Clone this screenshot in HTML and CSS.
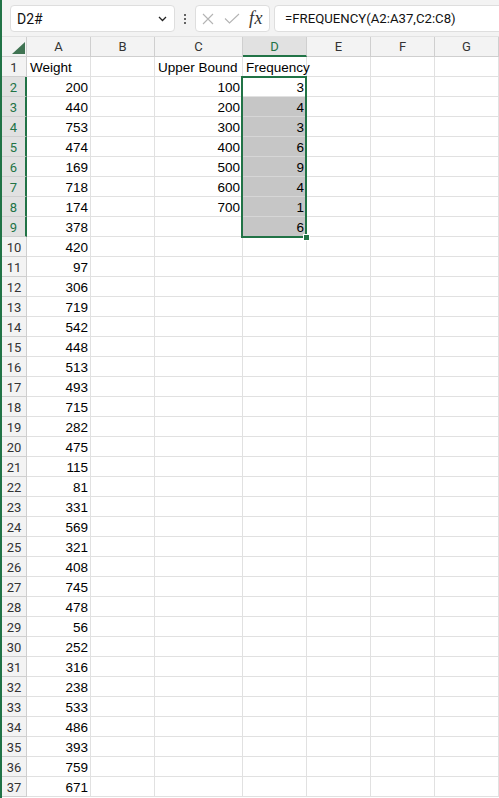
FILE: index.html
```html
<!DOCTYPE html>
<html>
<head>
<meta charset="utf-8">
<link rel="stylesheet" href="styles.css">
</head>
<body>
<div class="app">
  <div class="topbar">
    <div class="namebox">
      <span class="nbtext">D2#</span>
      <svg class="chev" width="9" height="6" viewBox="0 0 9 6"><path d="M1 1 L4.5 4.5 L8 1" fill="none" stroke="#222" stroke-width="1.3"/></svg>
    </div>
    <div class="dots"><i></i><i></i><i></i></div>
    <div class="fbtns">
      <svg class="xicon" width="12" height="12" viewBox="0 0 12 12"><path d="M1 1 L11 11 M11 1 L1 11" stroke="#b4b4b4" stroke-width="1.1" fill="none"/></svg>
      <svg class="check" width="16" height="11" viewBox="0 0 16 11"><path d="M1 5.5 L5.5 10 L15 1" stroke="#b4b4b4" stroke-width="1.1" fill="none"/></svg>
      <span class="fx">fx</span>
    </div>
    <div class="formula">=FREQUENCY(A2:A37,C2:C8)</div>
  </div>
  <div class="sheet">
    <div class="row head">
      <div class="corner"><svg width="13" height="12" viewBox="0 0 13 12"><path d="M13 0 L13 12 L0 12 Z" fill="#3f7352"/></svg></div>
      <div class="ch">A</div><div class="ch">B</div><div class="ch">C</div><div class="ch sel">D</div><div class="ch">E</div><div class="ch">F</div><div class="ch">G</div>
    </div>
    <div class="row"><div class="rh">1</div><div class="c">Weight</div><div class="c"></div><div class="c">Upper Bound</div><div class="c">Frequency</div><div class="c"></div><div class="c"></div><div class="c"></div></div>
    <div class="row"><div class="rh sel">2</div><div class="c n">200</div><div class="c"></div><div class="c n">100</div><div class="c n">3</div><div class="c"></div><div class="c"></div><div class="c"></div></div>
    <div class="row"><div class="rh sel">3</div><div class="c n">440</div><div class="c"></div><div class="c n">200</div><div class="c n g">4</div><div class="c"></div><div class="c"></div><div class="c"></div></div>
    <div class="row"><div class="rh sel">4</div><div class="c n">753</div><div class="c"></div><div class="c n">300</div><div class="c n g">3</div><div class="c"></div><div class="c"></div><div class="c"></div></div>
    <div class="row"><div class="rh sel">5</div><div class="c n">474</div><div class="c"></div><div class="c n">400</div><div class="c n g">6</div><div class="c"></div><div class="c"></div><div class="c"></div></div>
    <div class="row"><div class="rh sel">6</div><div class="c n">169</div><div class="c"></div><div class="c n">500</div><div class="c n g">9</div><div class="c"></div><div class="c"></div><div class="c"></div></div>
    <div class="row"><div class="rh sel">7</div><div class="c n">718</div><div class="c"></div><div class="c n">600</div><div class="c n g">4</div><div class="c"></div><div class="c"></div><div class="c"></div></div>
    <div class="row"><div class="rh sel">8</div><div class="c n">174</div><div class="c"></div><div class="c n">700</div><div class="c n g">1</div><div class="c"></div><div class="c"></div><div class="c"></div></div>
    <div class="row"><div class="rh sel">9</div><div class="c n">378</div><div class="c"></div><div class="c"></div><div class="c n g last">6</div><div class="c"></div><div class="c"></div><div class="c"></div></div>
    <div class="row"><div class="rh">10</div><div class="c n">420</div><div class="c"></div><div class="c"></div><div class="c"></div><div class="c"></div><div class="c"></div><div class="c"></div></div>
    <div class="row"><div class="rh">11</div><div class="c n">97</div><div class="c"></div><div class="c"></div><div class="c"></div><div class="c"></div><div class="c"></div><div class="c"></div></div>
    <div class="row"><div class="rh">12</div><div class="c n">306</div><div class="c"></div><div class="c"></div><div class="c"></div><div class="c"></div><div class="c"></div><div class="c"></div></div>
    <div class="row"><div class="rh">13</div><div class="c n">719</div><div class="c"></div><div class="c"></div><div class="c"></div><div class="c"></div><div class="c"></div><div class="c"></div></div>
    <div class="row"><div class="rh">14</div><div class="c n">542</div><div class="c"></div><div class="c"></div><div class="c"></div><div class="c"></div><div class="c"></div><div class="c"></div></div>
    <div class="row"><div class="rh">15</div><div class="c n">448</div><div class="c"></div><div class="c"></div><div class="c"></div><div class="c"></div><div class="c"></div><div class="c"></div></div>
    <div class="row"><div class="rh">16</div><div class="c n">513</div><div class="c"></div><div class="c"></div><div class="c"></div><div class="c"></div><div class="c"></div><div class="c"></div></div>
    <div class="row"><div class="rh">17</div><div class="c n">493</div><div class="c"></div><div class="c"></div><div class="c"></div><div class="c"></div><div class="c"></div><div class="c"></div></div>
    <div class="row"><div class="rh">18</div><div class="c n">715</div><div class="c"></div><div class="c"></div><div class="c"></div><div class="c"></div><div class="c"></div><div class="c"></div></div>
    <div class="row"><div class="rh">19</div><div class="c n">282</div><div class="c"></div><div class="c"></div><div class="c"></div><div class="c"></div><div class="c"></div><div class="c"></div></div>
    <div class="row"><div class="rh">20</div><div class="c n">475</div><div class="c"></div><div class="c"></div><div class="c"></div><div class="c"></div><div class="c"></div><div class="c"></div></div>
    <div class="row"><div class="rh">21</div><div class="c n">115</div><div class="c"></div><div class="c"></div><div class="c"></div><div class="c"></div><div class="c"></div><div class="c"></div></div>
    <div class="row"><div class="rh">22</div><div class="c n">81</div><div class="c"></div><div class="c"></div><div class="c"></div><div class="c"></div><div class="c"></div><div class="c"></div></div>
    <div class="row"><div class="rh">23</div><div class="c n">331</div><div class="c"></div><div class="c"></div><div class="c"></div><div class="c"></div><div class="c"></div><div class="c"></div></div>
    <div class="row"><div class="rh">24</div><div class="c n">569</div><div class="c"></div><div class="c"></div><div class="c"></div><div class="c"></div><div class="c"></div><div class="c"></div></div>
    <div class="row"><div class="rh">25</div><div class="c n">321</div><div class="c"></div><div class="c"></div><div class="c"></div><div class="c"></div><div class="c"></div><div class="c"></div></div>
    <div class="row"><div class="rh">26</div><div class="c n">408</div><div class="c"></div><div class="c"></div><div class="c"></div><div class="c"></div><div class="c"></div><div class="c"></div></div>
    <div class="row"><div class="rh">27</div><div class="c n">745</div><div class="c"></div><div class="c"></div><div class="c"></div><div class="c"></div><div class="c"></div><div class="c"></div></div>
    <div class="row"><div class="rh">28</div><div class="c n">478</div><div class="c"></div><div class="c"></div><div class="c"></div><div class="c"></div><div class="c"></div><div class="c"></div></div>
    <div class="row"><div class="rh">29</div><div class="c n">56</div><div class="c"></div><div class="c"></div><div class="c"></div><div class="c"></div><div class="c"></div><div class="c"></div></div>
    <div class="row"><div class="rh">30</div><div class="c n">252</div><div class="c"></div><div class="c"></div><div class="c"></div><div class="c"></div><div class="c"></div><div class="c"></div></div>
    <div class="row"><div class="rh">31</div><div class="c n">316</div><div class="c"></div><div class="c"></div><div class="c"></div><div class="c"></div><div class="c"></div><div class="c"></div></div>
    <div class="row"><div class="rh">32</div><div class="c n">238</div><div class="c"></div><div class="c"></div><div class="c"></div><div class="c"></div><div class="c"></div><div class="c"></div></div>
    <div class="row"><div class="rh">33</div><div class="c n">533</div><div class="c"></div><div class="c"></div><div class="c"></div><div class="c"></div><div class="c"></div><div class="c"></div></div>
    <div class="row"><div class="rh">34</div><div class="c n">486</div><div class="c"></div><div class="c"></div><div class="c"></div><div class="c"></div><div class="c"></div><div class="c"></div></div>
    <div class="row"><div class="rh">35</div><div class="c n">393</div><div class="c"></div><div class="c"></div><div class="c"></div><div class="c"></div><div class="c"></div><div class="c"></div></div>
    <div class="row"><div class="rh">36</div><div class="c n">759</div><div class="c"></div><div class="c"></div><div class="c"></div><div class="c"></div><div class="c"></div><div class="c"></div></div>
    <div class="row"><div class="rh">37</div><div class="c n">671</div><div class="c"></div><div class="c"></div><div class="c"></div><div class="c"></div><div class="c"></div><div class="c"></div></div>
    <div class="selection"><span class="handle"></span></div>
  </div>
</div>
</body>
</html>
```
FILE: styles.css
```css
* { box-sizing: border-box; }
html, body { margin: 0; padding: 0; background: #fff; }
.app {
  width: 499px;
  height: 798px;
  overflow: hidden;
  border-left: 2px solid #217346;
  background: #fff;
}
.topbar {
  height: 37px;
  background: #f3f3f3;
  border-bottom: 1px solid #e2e2e2;
  display: flex;
  align-items: flex-start;
  padding-top: 5px;
  padding-left: 8px;
  white-space: nowrap;
  overflow: hidden;
  font-family: Roboto, "Liberation Sans", sans-serif;
}
.topbar > * { flex-shrink: 0; }
.namebox {
  width: 165px;
  height: 27px;
  background: #fff;
  border: 1px solid #dedede;
  border-radius: 4px;
  display: flex;
  align-items: center;
  padding-left: 6px;
  padding-right: 7px;
  font-size: 14px;
  color: #111;
}
.nbtext { flex: 1; }
.dots {
  width: 20px;
  height: 27px;
  display: flex;
  flex-direction: column;
  align-items: center;
  justify-content: center;
  gap: 2px;
}
.dots i { display: block; width: 2px; height: 2px; background: #333; border-radius: 1px; }
.fbtns {
  width: 75px;
  height: 27px;
  background: #fff;
  border: 1px solid #dedede;
  border-radius: 4px;
  display: flex;
  align-items: center;
  padding-left: 6px;
}
.xicon { margin-right: 10px; }
.check { margin-right: 9px; }
.fx {
  font-family: "Liberation Serif", serif;
  font-style: italic;
  font-size: 18px;
  color: #333;
  letter-spacing: 0.5px;
}
.formula {
  margin-left: 4px;
  width: 260px;
  height: 27px;
  background: #fff;
  border: 1px solid #dedede;
  border-radius: 4px;
  padding-left: 10px;
  font-size: 13.2px;
  line-height: 25px;
  color: #111;
}
.sheet { position: relative; }
.row {
  display: grid;
  grid-template-columns: 25px 64px 64px 88px 64px 64px 64px 64px;
  height: 20px;
}
.c {
  height: 20px;
  border-right: 1px solid #e1e1e1;
  border-bottom: 1px solid #e1e1e1;
  font-family: "Liberation Sans", Arial, sans-serif;
  font-size: 13.5px;
  line-height: 16px;
  padding: 3px 2px 0 3px;
  color: #000;
  white-space: nowrap;
  overflow: visible;
}
.c.n { text-align: right; }
.c.g { background: #c6c6c6; border-bottom-color: #d6d6d6; }
.rh, .ch, .corner {
  background: #f3f3f3;
  border-right: 1px solid #cfcfcf;
  border-bottom: 1px solid #cfcfcf;
  font-family: Roboto, "Liberation Sans", sans-serif;
  font-size: 13px;
  color: #333;
  text-align: center;
  height: 20px;
}
.rh { line-height: 16px; padding-top: 3px; }
.rh.sel { background: #e1e1e1; color: #217346; border-right: 2px solid #217346; }
.ch { line-height: 20px; }
.ch.sel { background: #e1e1e1; color: #217346; border-bottom: 2px solid #217346; line-height: 19px; }
.corner { display: flex; align-items: flex-end; justify-content: flex-end; padding: 0 1px 2px 0; }
.corner svg { display: block; }
.selection {
  position: absolute;
  left: 239px;
  top: 39px;
  width: 66px;
  height: 162px;
  border: 2px solid #217346;
  pointer-events: none;
}
.handle {
  position: absolute;
  right: -5px;
  bottom: -5px;
  width: 7px;
  height: 7px;
  background: #217346;
  border: 1px solid #fff;
}
```
